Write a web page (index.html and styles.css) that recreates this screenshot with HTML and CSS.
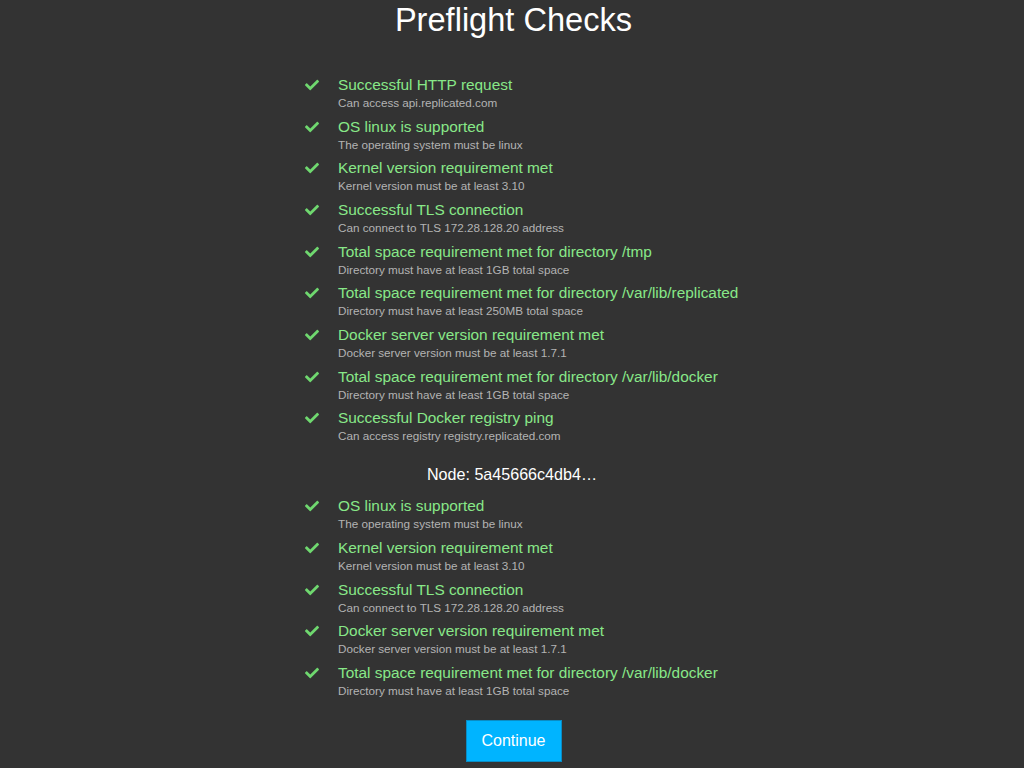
FILE: index.html
```html
<!DOCTYPE html>
<html lang="en">
<head>
    <meta charset="UTF-8">
    <meta name="viewport" content="width=device-width, initial-scale=1.0">
    <title>Preflight Checks</title>
    <link rel="stylesheet" href="styles.css">
</head>
<body>
    <div class="page">
        <h1>Preflight Checks</h1>

        <ul class="checks">
            <li class="check">
                <svg class="icon" viewBox="0 0 512 512"><path d="M173.9 439.4l-166.4-166.4c-10-10-10-26.2 0-36.2l36.2-36.2c10-10 26.2-10 36.2 0L192 312.7 432.1 72.6c10-10 26.2-10 36.2 0l36.2 36.2c10 10 10 26.2 0 36.2l-294.4 294.4c-10 10-26.2 10-36.2 0z"/></svg>
                <div class="text">
                    <div class="title">Successful HTTP request</div>
                    <div class="detail">Can access api.replicated.com</div>
                </div>
            </li>
            <li class="check">
                <svg class="icon" viewBox="0 0 512 512"><path d="M173.9 439.4l-166.4-166.4c-10-10-10-26.2 0-36.2l36.2-36.2c10-10 26.2-10 36.2 0L192 312.7 432.1 72.6c10-10 26.2-10 36.2 0l36.2 36.2c10 10 10 26.2 0 36.2l-294.4 294.4c-10 10-26.2 10-36.2 0z"/></svg>
                <div class="text">
                    <div class="title">OS linux is supported</div>
                    <div class="detail">The operating system must be linux</div>
                </div>
            </li>
            <li class="check">
                <svg class="icon" viewBox="0 0 512 512"><path d="M173.9 439.4l-166.4-166.4c-10-10-10-26.2 0-36.2l36.2-36.2c10-10 26.2-10 36.2 0L192 312.7 432.1 72.6c10-10 26.2-10 36.2 0l36.2 36.2c10 10 10 26.2 0 36.2l-294.4 294.4c-10 10-26.2 10-36.2 0z"/></svg>
                <div class="text">
                    <div class="title">Kernel version requirement met</div>
                    <div class="detail">Kernel version must be at least 3.10</div>
                </div>
            </li>
            <li class="check">
                <svg class="icon" viewBox="0 0 512 512"><path d="M173.9 439.4l-166.4-166.4c-10-10-10-26.2 0-36.2l36.2-36.2c10-10 26.2-10 36.2 0L192 312.7 432.1 72.6c10-10 26.2-10 36.2 0l36.2 36.2c10 10 10 26.2 0 36.2l-294.4 294.4c-10 10-26.2 10-36.2 0z"/></svg>
                <div class="text">
                    <div class="title">Successful TLS connection</div>
                    <div class="detail">Can connect to TLS 172.28.128.20 address</div>
                </div>
            </li>
            <li class="check">
                <svg class="icon" viewBox="0 0 512 512"><path d="M173.9 439.4l-166.4-166.4c-10-10-10-26.2 0-36.2l36.2-36.2c10-10 26.2-10 36.2 0L192 312.7 432.1 72.6c10-10 26.2-10 36.2 0l36.2 36.2c10 10 10 26.2 0 36.2l-294.4 294.4c-10 10-26.2 10-36.2 0z"/></svg>
                <div class="text">
                    <div class="title">Total space requirement met for directory /tmp</div>
                    <div class="detail">Directory must have at least 1GB total space</div>
                </div>
            </li>
            <li class="check">
                <svg class="icon" viewBox="0 0 512 512"><path d="M173.9 439.4l-166.4-166.4c-10-10-10-26.2 0-36.2l36.2-36.2c10-10 26.2-10 36.2 0L192 312.7 432.1 72.6c10-10 26.2-10 36.2 0l36.2 36.2c10 10 10 26.2 0 36.2l-294.4 294.4c-10 10-26.2 10-36.2 0z"/></svg>
                <div class="text">
                    <div class="title">Total space requirement met for directory /var/lib/replicated</div>
                    <div class="detail">Directory must have at least 250MB total space</div>
                </div>
            </li>
            <li class="check">
                <svg class="icon" viewBox="0 0 512 512"><path d="M173.9 439.4l-166.4-166.4c-10-10-10-26.2 0-36.2l36.2-36.2c10-10 26.2-10 36.2 0L192 312.7 432.1 72.6c10-10 26.2-10 36.2 0l36.2 36.2c10 10 10 26.2 0 36.2l-294.4 294.4c-10 10-26.2 10-36.2 0z"/></svg>
                <div class="text">
                    <div class="title">Docker server version requirement met</div>
                    <div class="detail">Docker server version must be at least 1.7.1</div>
                </div>
            </li>
            <li class="check">
                <svg class="icon" viewBox="0 0 512 512"><path d="M173.9 439.4l-166.4-166.4c-10-10-10-26.2 0-36.2l36.2-36.2c10-10 26.2-10 36.2 0L192 312.7 432.1 72.6c10-10 26.2-10 36.2 0l36.2 36.2c10 10 10 26.2 0 36.2l-294.4 294.4c-10 10-26.2 10-36.2 0z"/></svg>
                <div class="text">
                    <div class="title">Total space requirement met for directory /var/lib/docker</div>
                    <div class="detail">Directory must have at least 1GB total space</div>
                </div>
            </li>
            <li class="check">
                <svg class="icon" viewBox="0 0 512 512"><path d="M173.9 439.4l-166.4-166.4c-10-10-10-26.2 0-36.2l36.2-36.2c10-10 26.2-10 36.2 0L192 312.7 432.1 72.6c10-10 26.2-10 36.2 0l36.2 36.2c10 10 10 26.2 0 36.2l-294.4 294.4c-10 10-26.2 10-36.2 0z"/></svg>
                <div class="text">
                    <div class="title">Successful Docker registry ping</div>
                    <div class="detail">Can access registry registry.replicated.com</div>
                </div>
            </li>
        </ul>

        <h2 class="node">Node: 5a45666c4db4…</h2>

        <ul class="checks">
            <li class="check">
                <svg class="icon" viewBox="0 0 512 512"><path d="M173.9 439.4l-166.4-166.4c-10-10-10-26.2 0-36.2l36.2-36.2c10-10 26.2-10 36.2 0L192 312.7 432.1 72.6c10-10 26.2-10 36.2 0l36.2 36.2c10 10 10 26.2 0 36.2l-294.4 294.4c-10 10-26.2 10-36.2 0z"/></svg>
                <div class="text">
                    <div class="title">OS linux is supported</div>
                    <div class="detail">The operating system must be linux</div>
                </div>
            </li>
            <li class="check">
                <svg class="icon" viewBox="0 0 512 512"><path d="M173.9 439.4l-166.4-166.4c-10-10-10-26.2 0-36.2l36.2-36.2c10-10 26.2-10 36.2 0L192 312.7 432.1 72.6c10-10 26.2-10 36.2 0l36.2 36.2c10 10 10 26.2 0 36.2l-294.4 294.4c-10 10-26.2 10-36.2 0z"/></svg>
                <div class="text">
                    <div class="title">Kernel version requirement met</div>
                    <div class="detail">Kernel version must be at least 3.10</div>
                </div>
            </li>
            <li class="check">
                <svg class="icon" viewBox="0 0 512 512"><path d="M173.9 439.4l-166.4-166.4c-10-10-10-26.2 0-36.2l36.2-36.2c10-10 26.2-10 36.2 0L192 312.7 432.1 72.6c10-10 26.2-10 36.2 0l36.2 36.2c10 10 10 26.2 0 36.2l-294.4 294.4c-10 10-26.2 10-36.2 0z"/></svg>
                <div class="text">
                    <div class="title">Successful TLS connection</div>
                    <div class="detail">Can connect to TLS 172.28.128.20 address</div>
                </div>
            </li>
            <li class="check">
                <svg class="icon" viewBox="0 0 512 512"><path d="M173.9 439.4l-166.4-166.4c-10-10-10-26.2 0-36.2l36.2-36.2c10-10 26.2-10 36.2 0L192 312.7 432.1 72.6c10-10 26.2-10 36.2 0l36.2 36.2c10 10 10 26.2 0 36.2l-294.4 294.4c-10 10-26.2 10-36.2 0z"/></svg>
                <div class="text">
                    <div class="title">Docker server version requirement met</div>
                    <div class="detail">Docker server version must be at least 1.7.1</div>
                </div>
            </li>
            <li class="check">
                <svg class="icon" viewBox="0 0 512 512"><path d="M173.9 439.4l-166.4-166.4c-10-10-10-26.2 0-36.2l36.2-36.2c10-10 26.2-10 36.2 0L192 312.7 432.1 72.6c10-10 26.2-10 36.2 0l36.2 36.2c10 10 10 26.2 0 36.2l-294.4 294.4c-10 10-26.2 10-36.2 0z"/></svg>
                <div class="text">
                    <div class="title">Total space requirement met for directory /var/lib/docker</div>
                    <div class="detail">Directory must have at least 1GB total space</div>
                </div>
            </li>
        </ul>

        <div class="actions">
            <button class="button">Continue</button>
        </div>
    </div>
</body>
</html>
```

FILE: styles.css
```css
body {
    font-family: "Liberation Sans", Arial, Helvetica, sans-serif;
    background-color: #333333;
    color: #ffffff;
    margin: 0;
    padding: 0;
}
.page {
    display: flex;
    flex-direction: column;
    align-items: center;
}
h1 {
    font-size: 32.6px;
    font-weight: normal;
    line-height: 40px;
    margin: 0 0 0 3px;
    color: #ffffff;
}
.checks {
    list-style: none;
    margin: 34px 0 0 0;
    padding: 0;
    width: 414px;
}
.checks + .actions {
    margin: 16.5px 0 0 3px;
}
.node + .checks {
    margin-top: 0;
}
.check {
    display: flex;
    align-items: flex-start;
    white-space: nowrap;
    margin-bottom: 4.67px;
}
.icon {
    width: 14px;
    height: 14px;
    fill: #6fd86f;
    margin-top: 4px;
    margin-right: 19px;
    flex-shrink: 0;
}
.title {
    font-size: 15.4px;
    line-height: 21px;
    color: #88e888;
}
.detail {
    font-size: 11.7px;
    line-height: 16px;
    color: #b3b3b3;
}
.node {
    font-size: 16.1px;
    font-weight: normal;
    line-height: 20px;
    margin: 15px 0 11.5px 0;
    color: #ffffff;
}
.button {
    font-family: "Liberation Sans", Arial, Helvetica, sans-serif;
    background-color: #00b4ff;
    color: #ffffff;
    border: 1px solid #0a8cc4;
    border-radius: 0;
    width: 96px;
    height: 42px;
    font-size: 16px;
    cursor: pointer;
}
```
